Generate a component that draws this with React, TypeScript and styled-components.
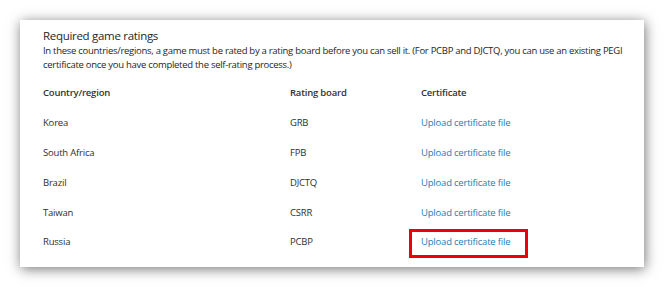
import React from "react";
import styled, {createGlobalStyle} from "styled-components";

type Rating = {
    country: string;
    board: string;
    highlighted?: boolean;
};

const ratings: Rating[] = [
    {country: "Korea", board: "GRB"},
    {country: "South Africa", board: "FPB"},
    {country: "Brazil", board: "DJCTQ"},
    {country: "Taiwan", board: "CSRR"},
    {country: "Russia", board: "PCBP", highlighted: true},
];

const App = () => {
    return (
        <>
            <GlobalStyle/>
            <Page>
                <Card>
                    <Title>Required game ratings</Title>
                    <Description>
                        In these countries/regions, a game must be rated by a rating board before you can sell it. (For
                        PCBP and DJCTQ, you can use an existing PEGI certificate once you have completed the
                        self-rating process.)
                    </Description>
                    <Table>
                        <HeaderCell>Country/region</HeaderCell>
                        <HeaderCell>Rating board</HeaderCell>
                        <HeaderCell>Certificate</HeaderCell>
                        {ratings.map((r) => (
                            <React.Fragment key={r.country}>
                                <Cell>{r.country}</Cell>
                                <Cell>{r.board}</Cell>
                                <Cell>
                                    <UploadLink href="#" $highlighted={r.highlighted}>
                                        Upload certificate file
                                    </UploadLink>
                                </Cell>
                            </React.Fragment>
                        ))}
                    </Table>
                </Card>
            </Page>
        </>
    );
};

export default App;


const GlobalStyle = createGlobalStyle`
  body {
    margin: 0;
    background: #ffffff;
    font-family: "Open Sans", "Noto Sans", sans-serif;
  }
`

const Page = styled.div`
  padding: 20px;
  width: 664px;
  height: 287px;
  box-sizing: border-box;
`

const Card = styled.div`
  width: 624px;
  height: 247px;
  box-sizing: border-box;
  padding: 8px 12px 0 23px;
  background: #ffffff;
  box-shadow: 1px 2px 12px rgba(0, 0, 0, 0.55);
`

const Title = styled.div`
  font-size: 11.5px;
  letter-spacing: -0.3px;
  color: #262626;
  line-height: 16px;
`

const Description = styled.div`
  font-size: 9.5px;
  letter-spacing: -0.28px;
  color: #262626;
  line-height: 14px;
`

const Table = styled.div`
  display: grid;
  grid-template-columns: 247px 131px 1fr;
  grid-auto-rows: 29.8px;
  align-items: center;
  margin-top: 6px;
  font-size: 9.5px;
  letter-spacing: -0.2px;
`

const HeaderCell = styled.div`
  font-weight: 600;
  color: #333333;
`

const Cell = styled.div`
  color: #2e2e2e;
`

const UploadLink = styled.a<{ $highlighted?: boolean }>`
  position: relative;
  color: #1a7db5;
  text-decoration: none;

  &::after {
    content: "";
    display: ${p => p.$highlighted ? "block" : "none"};
    position: absolute;
    left: -12px;
    right: -18px;
    top: -6px;
    bottom: -10px;
    border: 3px solid #ee0000;
  }
`
